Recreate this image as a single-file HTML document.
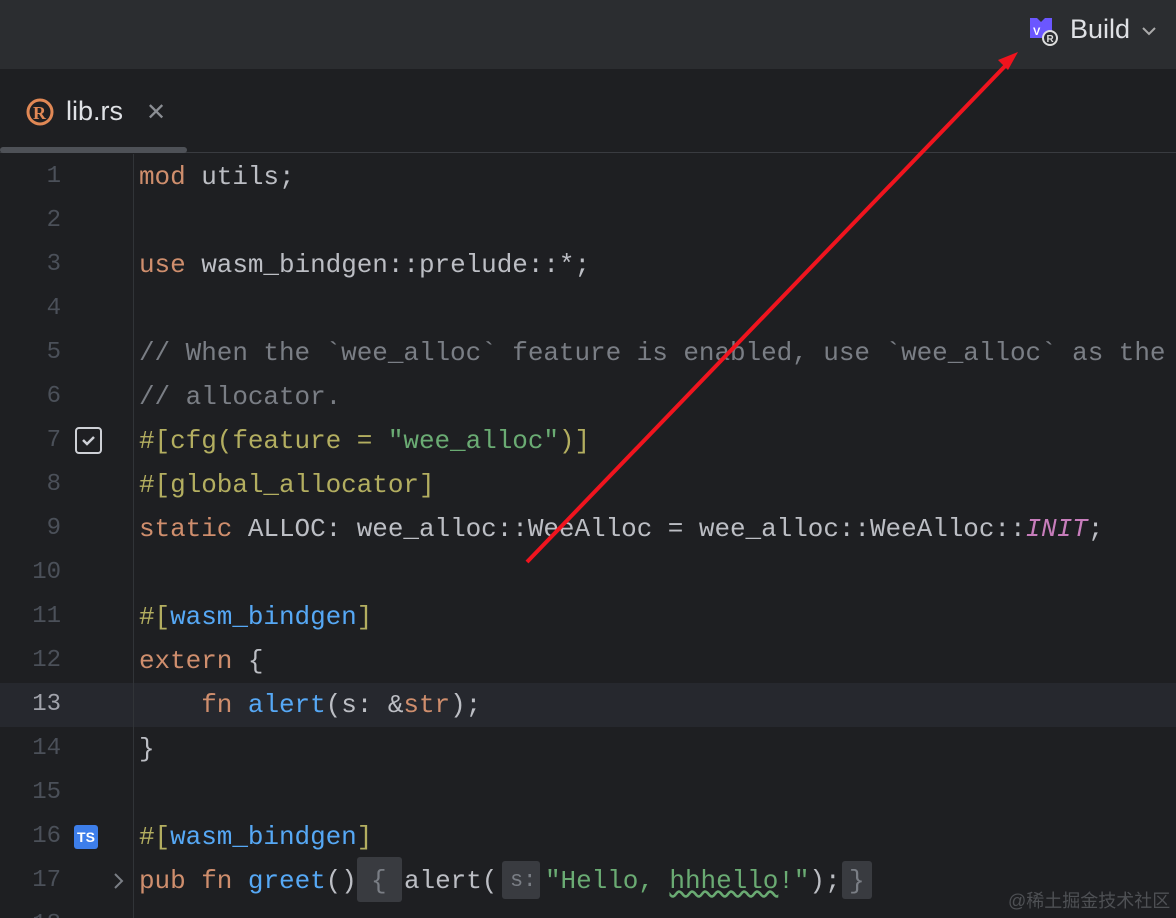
<!DOCTYPE html>
<html><head><meta charset="utf-8"><style>
*{margin:0;padding:0;box-sizing:border-box}
html,body{width:1176px;height:918px;overflow:hidden}
body{background:#1e1f22;position:relative;font-family:"Liberation Sans",sans-serif}
.top{position:absolute;left:0;top:0;width:1176px;height:70px;background:#2b2d30;border-bottom:1px solid #1e1f22}
.tabs{position:absolute;left:0;top:70px;width:1176px;height:83px;background:#1e1f22;border-bottom:1px solid #393b40}
.tabline{position:absolute;left:0;top:147px;width:187px;height:6px;background:#4e5157;border-radius:3px}
.gut{position:absolute;left:133px;top:154px;width:1px;height:764px;background:#313438}
.cur{position:absolute;left:0;top:683px;width:1176px;height:44px;background:#26282e}
.ln{position:absolute;left:0;width:61px;text-align:right;font-family:"Liberation Mono",monospace;font-size:24px;color:#4b5059;line-height:44px}
.code{position:absolute;left:139px;font-family:"Liberation Mono",monospace;font-size:26px;letter-spacing:-0.05px;color:#bcbec4;line-height:44px;white-space:pre}
.k{color:#cf8e6d}.f{color:#56a8f5}.s{color:#6aab73}.c{color:#7a7e85}.a{color:#b3ae60}.i{color:#c77dbb;font-style:italic}
.bx{position:absolute;background:#393b40;border-radius:3px}
</style></head><body>
<div class="top"></div>
<div style="position:absolute;left:1030px;top:18px;width:24px;height:24px;">
<svg width="28" height="30" viewBox="0 0 28 30"><path d="M0 0h7l4 4 4-4h7v20H0z" fill="#6b57ff"/><text x="3" y="17" font-size="11" fill="#fff" font-family="Liberation Sans" font-weight="bold">V</text><circle cx="20" cy="20" r="7" fill="#2b2d30" stroke="#ddd" stroke-width="2"/><text x="16.5" y="24" font-size="10" fill="#ddd" font-family="Liberation Sans" font-weight="bold">R</text></svg></div>
<div style="position:absolute;left:1070px;top:14px;font-size:27px;color:#dfe1e5">Build</div>
<svg style="position:absolute;left:1141px;top:25px" width="16" height="12"><path d="M2 3l6 6 6-6" stroke="#aaa" stroke-width="2" fill="none"/></svg>
<div class="tabs"></div>
<svg style="position:absolute;left:25px;top:97px" width="30" height="30" viewBox="0 0 30 30"><circle cx="15" cy="15" r="12" fill="none" stroke="#e08855" stroke-width="3"/><text x="8" y="22" font-size="18" font-weight="bold" fill="#e08855" font-family="Liberation Serif">R</text></svg>
<div style="position:absolute;left:66px;top:96px;font-size:27px;color:#dfe1e5">lib.rs</div>
<div style="position:absolute;left:146px;top:98px;font-size:24px;color:#8b8e94">✕</div>
<div class="tabline"></div>
<div class="cur"></div>
<div class="gut"></div>
<div class="ln" style="top:155px">1</div><div class="ln" style="top:199px">2</div><div class="ln" style="top:243px">3</div><div class="ln" style="top:287px">4</div><div class="ln" style="top:331px">5</div><div class="ln" style="top:375px">6</div><div class="ln" style="top:419px">7</div><div class="ln" style="top:463px">8</div><div class="ln" style="top:507px">9</div><div class="ln" style="top:551px">10</div><div class="ln" style="top:595px">11</div><div class="ln" style="top:639px">12</div><div class="ln" style="top:683px;color:#a1a3ab">13</div><div class="ln" style="top:727px">14</div><div class="ln" style="top:771px">15</div><div class="ln" style="top:815px">16</div><div class="ln" style="top:859px">17</div><div class="ln" style="top:903px">18</div>
<div style="position:absolute;left:75px;top:427px;width:27px;height:27px;border:2px solid #ced0d6;border-radius:4px"><svg width="23" height="23"><path d="M6 11l4 4 7-7" stroke="#ced0d6" stroke-width="2.5" fill="none"/></svg></div>
<div style="position:absolute;left:74px;top:825px;width:24px;height:24px;background:#3d7eea;border-radius:3px;color:#fff;font-size:14px;font-weight:bold;text-align:center;line-height:24px">TS</div>
<svg style="position:absolute;left:112px;top:871px" width="14" height="20"><path d="M3 3l7 7-7 7" stroke="#7a7e85" stroke-width="2" fill="none"/></svg>
<div class="code" style="top:155px"><span class="k">mod</span> utils;</div>
<div class="code" style="top:243px"><span class="k">use</span> wasm_bindgen::prelude::*;</div>
<div class="code" style="top:331px"><span class="c">// When the `wee_alloc` feature is enabled, use `wee_alloc` as the</span></div>
<div class="code" style="top:375px"><span class="c">// allocator.</span></div>
<div class="code" style="top:419px"><span class="a">#[cfg(feature = </span><span class="s">"wee_alloc"</span><span class="a">)]</span></div>
<div class="code" style="top:463px"><span class="a">#[global_allocator]</span></div>
<div class="code" style="top:507px"><span class="k">static</span> ALLOC: wee_alloc::WeeAlloc = wee_alloc::WeeAlloc::<span class="i">INIT</span>;</div>
<div class="code" style="top:595px"><span class="a">#[</span><span class="f">wasm_bindgen</span><span class="a">]</span></div>
<div class="code" style="top:639px"><span class="k">extern</span> {</div>
<div class="code" style="top:683px">    <span class="k">fn</span> <span class="f">alert</span>(s: &amp;<span class="k">str</span>);</div>
<div class="code" style="top:727px">}</div>
<div class="code" style="top:815px"><span class="a">#[</span><span class="f">wasm_bindgen</span><span class="a">]</span></div>
<div class="bx" style="left:357px;top:857px;width:45px;height:45px"></div>
<div class="bx" style="left:502px;top:861px;width:38px;height:38px"></div>
<div class="bx" style="left:842px;top:861px;width:30px;height:38px"></div>
<div class="code" style="top:859px"><span class="k">pub</span> <span class="k">fn</span> <span class="f">greet</span>()</div>
<div class="code" style="top:859px;left:371px;color:#7a7e85">{</div>
<div class="code" style="top:859px;left:404px">alert(</div>
<div class="code" style="top:859px;left:510px;color:#7a7e85;font-size:22px">s:</div>
<div class="code" style="top:859px;left:545px"><span class="s">"Hello, <span style="text-decoration:underline wavy #6aab73">hhhello</span>!"</span>);</div>
<div class="code" style="top:859px;left:849px;color:#7a7e85">}</div>
<div style="position:absolute;left:1008px;top:887px;font-size:18px;color:#4e5054;font-family:'Liberation Sans','Noto Sans CJK SC',sans-serif">@稀土掘金技术社区</div>
<svg style="position:absolute;left:0;top:0" width="1176" height="918"><line x1="527" y1="562" x2="1008" y2="63" stroke="#f0141e" stroke-width="4"/><path d="M1018 52l-20 8 10 10z" fill="#f0141e"/></svg>
</body></html>
